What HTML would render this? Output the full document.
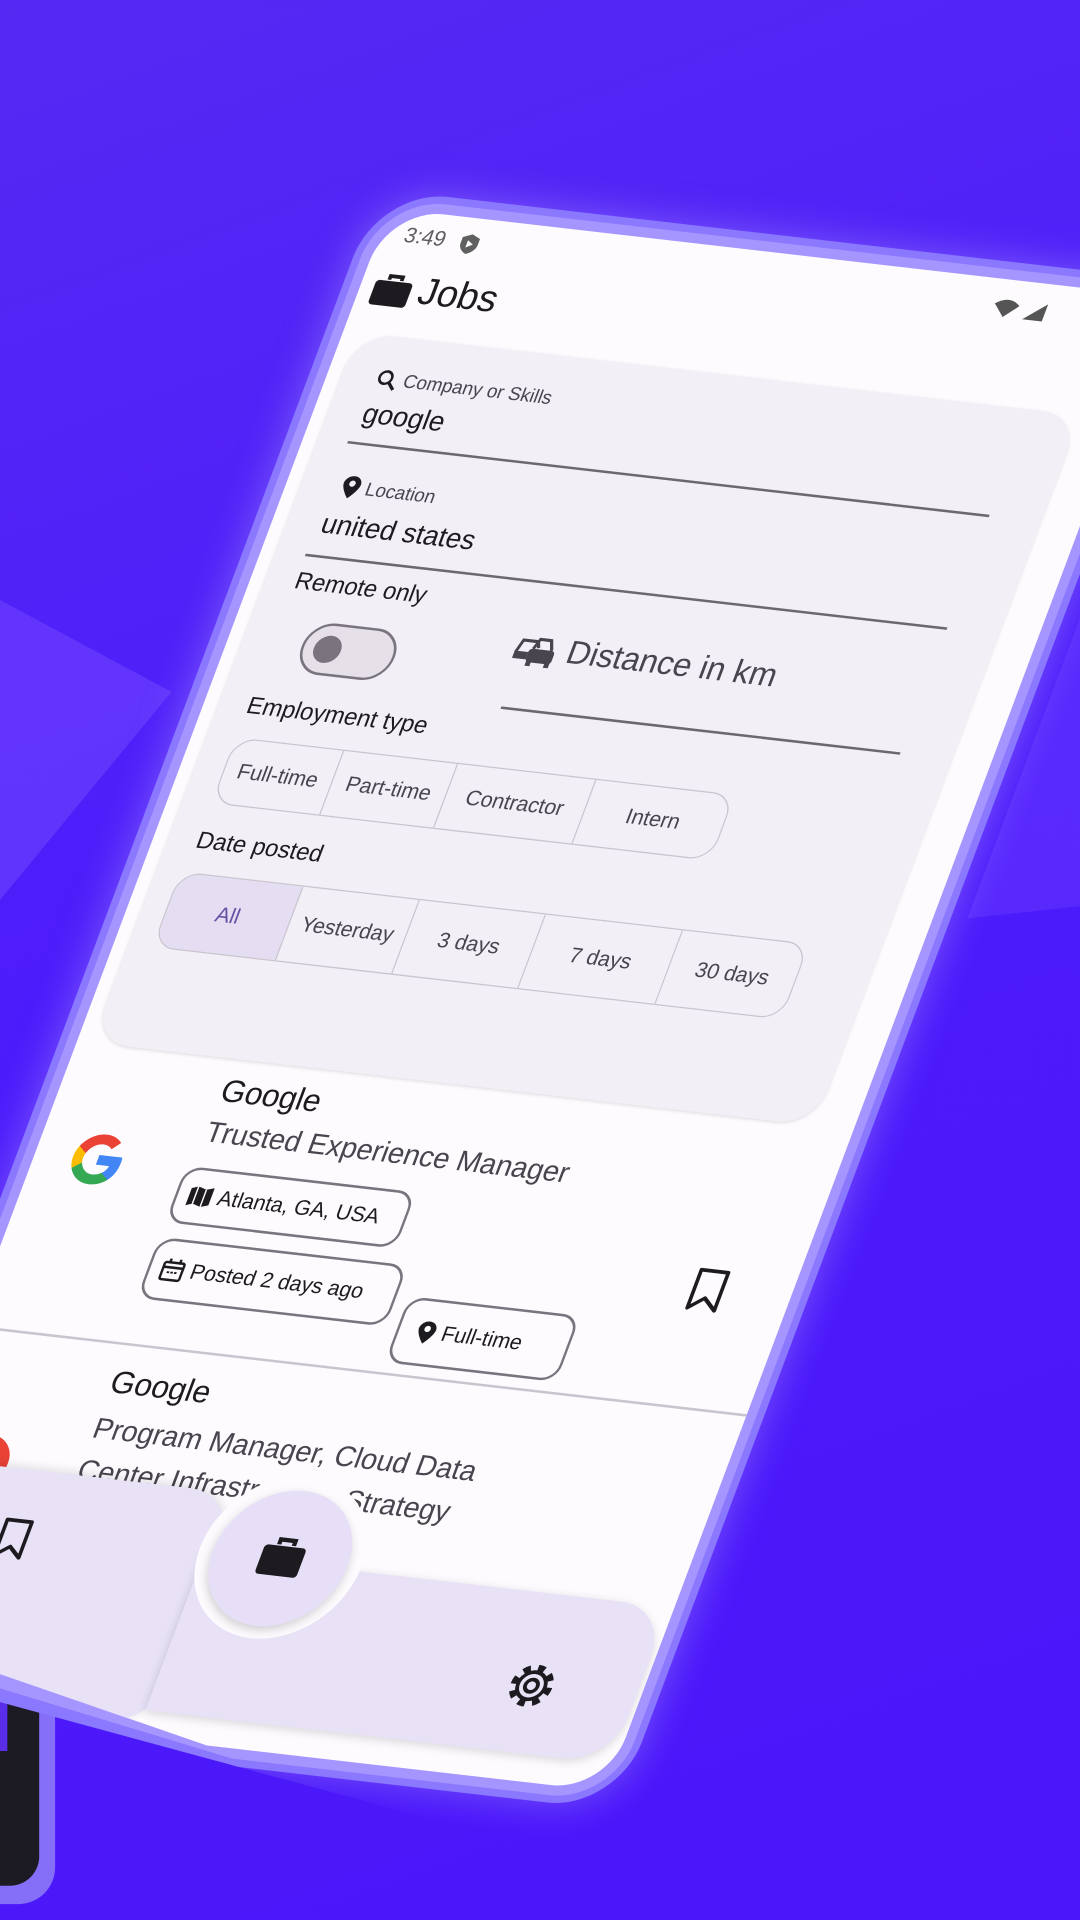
<!DOCTYPE html>
<html><head><meta charset="utf-8"><style>
*{margin:0;padding:0;box-sizing:border-box}
html,body{width:1080px;height:1920px;overflow:hidden}
body{background:linear-gradient(160deg,#5629f3 0%,#4d1cfb 45%,#4a16fa 100%);font-family:"Liberation Sans",sans-serif;position:relative}
#s{position:absolute;left:0;top:0;width:882px;height:1568px;transform:scale(1.22449);transform-origin:0 0}
.band{position:absolute}
#ph{position:absolute;left:0;top:0;width:640px;height:1220px;transform:matrix(1,0.115,-0.375,1,318,170);transform-origin:0 0}
.frame{position:absolute;left:-14px;top:-14px;width:662px;height:1248px;border-radius:56px;background:#8a78ff;box-shadow:0 0 30px rgba(200,190,255,.35);clip-path:polygon(-40px -40px,720px -40px,720px 1300px,-40px 1192px)}
.frame2{position:absolute;left:-8px;top:-8px;width:650px;height:1236px;border-radius:50px;background:#a596ff;clip-path:polygon(-40px -40px,720px -40px,720px 1300px,-40px 1172px)}
.scr{position:absolute;left:0;top:0;width:634px;height:1220px;border-radius:44px;background:#fdfbfe;overflow:hidden;clip-path:polygon(-10px -10px,700px -10px,700px 1300px,-10px 1155px)}
.a{position:absolute;white-space:nowrap;color:#1d1b20}
.card{position:absolute;left:12px;top:100px;width:590px;height:580px;border-radius:30px;background:#f3eff6;box-shadow:0 1px 3px rgba(0,0,0,.12)}
.line{position:absolute;height:2px;background:#6b6870}
.seg{position:absolute;display:flex;border:1.5px solid #cac4cf;border-radius:18px;overflow:hidden}
.seg div{border-right:1.5px solid #cac4cf;display:flex;align-items:center;justify-content:center;font-size:17px;color:#49454f;height:100%}
.seg div:last-child{border-right:none}
.chip{position:absolute;border:2px solid #79747e;border-radius:14px;display:flex;align-items:center;padding-left:8px;font-size:17px;color:#1d1b20;background:#fdfbfe}
</style></head><body>
<div id="s">
<svg class="band" style="left:0;top:0" width="882" height="1568"><polygon points="0,490 140,565 0,735" fill="#6a3dfd" opacity=".7"/><polygon points="882,505 882,740 790,750" fill="#6234fd" opacity=".6"/><rect x="-30" y="1320" width="75" height="235" rx="30" fill="#9385f7" opacity=".8"/><rect x="-30" y="1335" width="62" height="205" rx="24" fill="#1c1a22"/><rect x="0" y="1370" width="6" height="60" fill="#5a2ee8"/></svg>
<div id="ph">
<div class="frame"></div><div class="frame2"></div>
<div class="scr">
 <div class="a" style="left:20px;top:10px;font-size:17px;color:#5f5c63">3:49</div>
 <svg class="a" style="left:64px;top:12px" width="18" height="18" viewBox="0 0 18 18"><path d="M9 1 L16 4 V9 C16 13 12 16 9 17 C6 16 2 13 2 9 V4 Z" fill="#606060"/><path d="M7 6 L12 9 L7 12Z" fill="#fff"/></svg>
 <svg class="a" style="left:500px;top:14px" width="50" height="18" viewBox="0 0 50 18"><path d="M2 6 Q12 -2 22 6 L12 16Z" fill="#555"/><path d="M44 2 V16 H28Z" fill="#555"/></svg>
 <svg class="a" style="left:10px;top:50px" width="32" height="28" viewBox="0 0 32 28"><path d="M11 6 V3 H21 V6" fill="none" stroke="#1d1b20" stroke-width="3"/><rect x="1" y="7" width="30" height="20" rx="3" fill="#1d1b20"/></svg>
 <div class="a" style="left:48px;top:46px;font-size:30px">Jobs</div>
 <div class="card"></div>
 <svg class="a" style="left:40px;top:126px" width="18" height="18" viewBox="0 0 18 18"><circle cx="7" cy="7" r="5" fill="none" stroke="#1d1b20" stroke-width="2"/><path d="M11 11 L16 16" stroke="#1d1b20" stroke-width="2.4"/></svg>
 <div class="a" style="left:62px;top:126px;font-size:15px;color:#49454f">Company or Skills</div>
 <div class="a" style="left:40px;top:150px;font-size:22px">google</div>
 <div class="line" style="left:36px;top:186px;width:524px"></div>
 <svg class="a" style="left:44px;top:212px" width="16" height="20" viewBox="0 0 16 20"><path d="M8 1 C3 1 1 5 1 7 C1 12 8 19 8 19 C8 19 15 12 15 7 C15 5 13 1 8 1Z" fill="#1d1b20"/><circle cx="8" cy="7" r="2.5" fill="#f3eff6"/></svg>
 <div class="a" style="left:64px;top:214px;font-size:15px;color:#49454f">Location</div>
 <div class="a" style="left:40px;top:240px;font-size:22px">united states</div>
 <div class="line" style="left:36px;top:278px;width:524px"></div>
 <div class="a" style="left:36px;top:290px;font-size:19px">Remote only</div>
 <div class="a" style="left:60px;top:330px;width:76px;height:42px;border-radius:21px;border:2.5px solid #79747e;background:#e6e0e9"><div style="position:absolute;left:8px;top:8px;width:22px;height:22px;border-radius:50%;background:#79747e"></div></div>
 <svg class="a" style="left:226px;top:320px" width="36" height="28" viewBox="0 0 36 28"><path d="M3 16 L6 6 H18 L20 11" fill="none" stroke="#49454f" stroke-width="2.5"/><rect x="13" y="12" width="21" height="11" rx="3" fill="#49454f"/><path d="M16 12 L19 4 H28 L31 12" fill="none" stroke="#49454f" stroke-width="2.5"/><rect x="14" y="22" width="4" height="4" fill="#49454f"/><rect x="29" y="22" width="4" height="4" fill="#49454f"/><rect x="2" y="15" width="11" height="6" fill="#49454f"/></svg>
 <div class="a" style="left:270px;top:316px;font-size:26px;color:#49454f">Distance in km</div>
 <div class="line" style="left:234px;top:380px;width:326px"></div>
 <div class="a" style="left:35px;top:392px;font-size:19px">Employment type</div>
 <div class="seg" style="left:35px;top:428px;width:408px;height:54px"><div style="width:88px">Full-time</div><div style="width:94px">Part-time</div><div style="width:113px">Contractor</div><div style="width:113px">Intern</div></div>
 <div class="a" style="left:35px;top:502px;font-size:19px">Date posted</div>
 <div class="seg" style="left:31px;top:538px;width:514px;height:62px"><div style="width:100px;background:#e5def2;color:#6750a4">All</div><div style="width:96px">Yesterday</div><div style="width:103px">3 days</div><div style="width:113px">7 days</div><div style="width:102px">30 days</div></div>
 <svg class="a" style="left:24px;top:744px" width="54" height="54" viewBox="0 0 48 48"><path d="M41 24.5c0-1.3-.1-2.5-.3-3.7H24v7h9.6c-.4 2.2-1.7 4.1-3.6 5.4v4.5h5.8C39.200 34.600 41 30 41 24.5z" fill="#4285F4"/><path d="M24 42c4.9 0 8.900-1.600 11.900-4.400l-5.800-4.500c-1.600 1.100-3.700 1.800-6.100 1.800-4.700 0-8.700-3.200-10.100-7.500H7.900v4.600C10.800 37.800 16.900 42 24 42z" fill="#34A853"/><path d="M13.900 27.400c-.4-1.100-.6-2.200-.6-3.400s.2-2.300.6-3.400v-4.600H7.900C6.700 18.400 6 21.100 6 24s.7 5.600 1.900 8z" fill="#FBBC05"/><path d="M24 13.100c2.600 0 5 .9 6.900 2.700l5.100-5.100C32.900 7.800 28.900 6 24 6 16.900 6 10.800 10.200 7.900 16l6 4.600c1.400-4.300 5.400-7.500 10.100-7.500z" fill="#EA4335"/></svg>
 <div class="a" style="left:128px;top:692px;font-size:25px">Google</div>
 <div class="a" style="left:128px;top:726px;font-size:23px;color:#49454f">Trusted Experience Manager</div>
 <div class="chip" style="left:122px;top:768px;width:188px;height:46px"><svg width="20" height="18" viewBox="0 0 20 18"><path d="M1 3 L6 1 L13 3 L19 1 V15 L13 17 L6 15 L1 17Z" fill="#1d1b20"/><path d="M6 1 V15 M13 3 V17" stroke="#fff" stroke-width="1.2"/></svg>&nbsp;Atlanta, GA, USA</div>
 <div class="chip" style="left:122px;top:826px;width:203px;height:50px"><svg width="20" height="20" viewBox="0 0 20 20"><rect x="2" y="4" width="16" height="14" rx="1.5" fill="none" stroke="#1d1b20" stroke-width="2"/><path d="M2 8 H18 M6 1 V5 M14 1 V5" stroke="#1d1b20" stroke-width="2"/><path d="M6 12 H8 M9 12 H11 M12 12 H14" stroke="#1d1b20" stroke-width="1.5"/></svg>&nbsp;Posted 2 days ago</div>
 <div class="chip" style="left:335px;top:850px;width:140px;height:54px;padding-left:14px"><svg width="16" height="20" viewBox="0 0 16 20"><path d="M8 1 C3 1 1 5 1 7 C1 12 8 19 8 19 C8 19 15 12 15 7 C15 5 13 1 8 1Z" fill="#1d1b20"/><circle cx="8" cy="7" r="2.5" fill="#fff"/></svg>&nbsp;Full-time</div>
 <svg class="a" style="left:552px;top:800px" width="30" height="38" viewBox="0 0 30 38"><path d="M4 3 H26 V34 L15 25 L4 34Z" fill="none" stroke="#1d1b20" stroke-width="3" stroke-linejoin="round"/></svg>
 <div class="line" style="left:0;top:912px;width:640px;height:1.5px;background:#cac4cf"></div>
 <svg class="a" style="left:22px;top:990px" width="54" height="54" viewBox="0 0 48 48"><circle cx="24" cy="24" r="15" fill="none" stroke="#EA4335" stroke-width="7"/></svg>
 <div class="a" style="left:127px;top:930px;font-size:25px">Google</div>
 <div class="a" style="left:127px;top:964px;font-size:23px;color:#49454f;line-height:34px">Program Manager, Cloud Data<br>Center Infrastructure Strategy</div>
 <div class="chip" style="left:122px;top:1040px;width:188px;height:44px">Atlanta, GA, USA</div>
 <div class="chip" style="left:122px;top:1100px;width:203px;height:48px">Posted 2 days ago</div>
 <div class="chip" style="left:335px;top:1120px;width:140px;height:52px">Full-time</div>
 <div class="a" style="left:-80px;top:1020px;width:340px;height:190px;border-radius:40px;background:#e9e2f7;box-shadow:0 -2px 8px rgba(0,0,0,.12)"></div>
 <div class="a" style="left:250px;top:1070px;width:380px;height:128px;border-radius:0 40px 40px 0;background:#e9e2f7;box-shadow:0 2px 8px rgba(0,0,0,.15)"></div>
 <div class="a" style="left:245px;top:1000px;width:132px;height:132px;border-radius:50%;background:#fdfbfe"></div>
 <div class="a" style="left:256px;top:1012px;width:110px;height:110px;border-radius:50%;background:#e7dff7;box-shadow:0 3px 8px rgba(0,0,0,.18)"></div>
 <svg class="a" style="left:294px;top:1048px" width="36" height="34" viewBox="0 0 36 34"><path d="M12 8 V4 H24 V8" fill="none" stroke="#1d1b20" stroke-width="3.5"/><rect x="1" y="9" width="34" height="24" rx="3" fill="#1d1b20"/></svg>
 <svg class="a" style="left:82px;top:1058px" width="28" height="36" viewBox="0 0 28 36"><path d="M4 3 H24 V32 L14 24 L4 32Z" fill="none" stroke="#1d1b20" stroke-width="3" stroke-linejoin="round"/></svg>
 <svg class="a" style="left:525px;top:1124px" width="40" height="40" viewBox="0 0 40 40"><circle cx="20" cy="20" r="14" fill="none" stroke="#1d1b20" stroke-width="6" stroke-dasharray="5.5 5.5"/><circle cx="20" cy="20" r="11" fill="none" stroke="#1d1b20" stroke-width="3"/><circle cx="20" cy="20" r="5" fill="none" stroke="#1d1b20" stroke-width="3"/></svg>
</div>
</div>
</div>
</body></html>
